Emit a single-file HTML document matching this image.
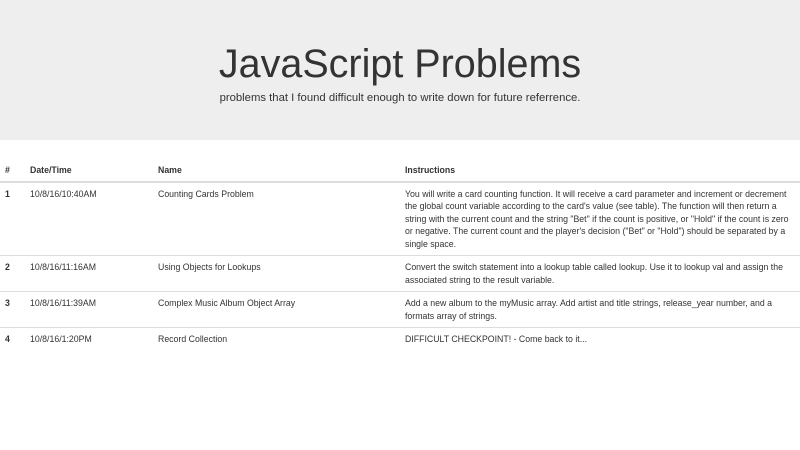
<!DOCTYPE html>
<html><head><style>
body{margin:0;font-family:"Liberation Sans",sans-serif;color:#333;background:#fff;font-size:8.75px;line-height:12.5px}
.j{background:#eee;height:140px;text-align:center;box-sizing:border-box;padding-top:42px}
.j h1{margin:0;font-size:39.5px;font-weight:normal;line-height:44px;color:#333}
.j p{margin:4px 0 0;font-size:11.3px;line-height:16px}
table{width:800px;border-collapse:collapse;margin-top:18px}
th,td{text-align:left;vertical-align:top;padding:5px 5px;border-top:1px solid #ddd}
th{border-top:none;border-bottom:2px solid #ddd;font-weight:bold;padding-top:6px;padding-bottom:4px}
td:first-child{font-weight:bold}
</style></head><body>
<div class="j"><h1>JavaScript Problems</h1><p>problems that I found difficult enough to write down for future referrence.</p></div>
<table>
<colgroup><col style="width:25px"><col style="width:128px"><col style="width:247px"><col></colgroup>
<tr><th>#</th><th>Date/Time</th><th>Name</th><th>Instructions</th></tr>
<tr><td>1</td><td>10/8/16/10:40AM</td><td>Counting Cards Problem</td><td>You will write a card counting function. It will receive a card parameter and increment or decrement the global count variable according to the card's value (see table). The function will then return a string with the current count and the string "Bet" if the count is positive, or "Hold" if the count is zero or negative. The current count and the player's decision ("Bet" or "Hold") should be separated by a single space.</td></tr>
<tr><td>2</td><td>10/8/16/11:16AM</td><td>Using Objects for Lookups</td><td>Convert the switch statement into a lookup table called lookup. Use it to lookup val and assign the associated string to the result variable.</td></tr>
<tr><td>3</td><td>10/8/16/11:39AM</td><td>Complex Music Album Object Array</td><td>Add a new album to the myMusic array. Add artist and title strings, release_year number, and a formats array of strings.</td></tr>
<tr><td>4</td><td>10/8/16/1:20PM</td><td>Record Collection</td><td>DIFFICULT CHECKPOINT! - Come back to it...</td></tr>
</table>
</body></html>
